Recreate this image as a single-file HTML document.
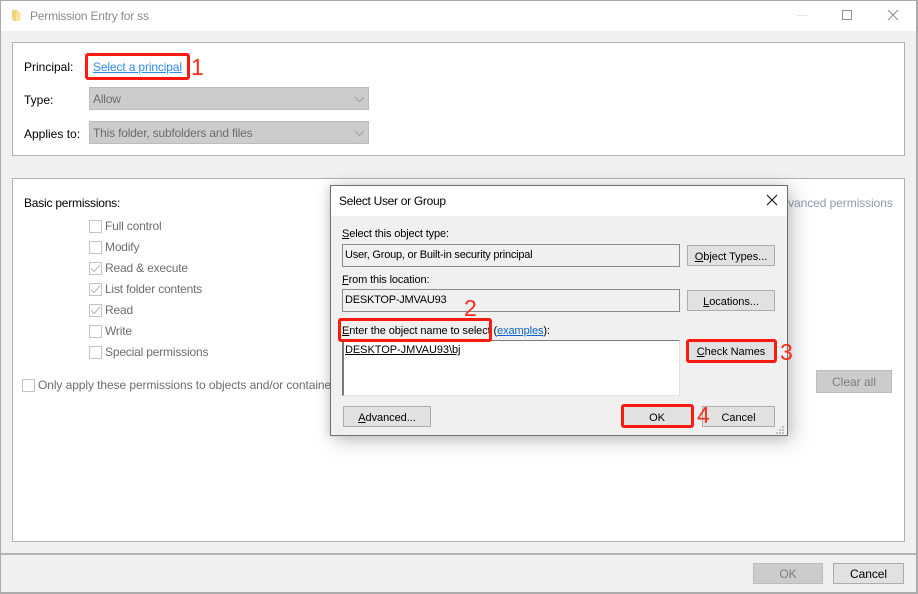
<!DOCTYPE html>
<html>
<head>
<meta charset="utf-8">
<style>
html,body{margin:0;padding:0;background:#fff;}
#p{position:relative;width:918px;height:594px;overflow:hidden;background:#f0f0f0;font-family:"Liberation Sans",sans-serif;font-size:12px;color:#000;}
#p div{position:absolute;box-sizing:border-box;}
.t{white-space:nowrap;line-height:16px;height:16px;letter-spacing:-.18px;}
.g{color:#6d6d6d;}
.cb{width:13px;height:13px;border:1px solid #c4c4c4;background:#fff;}
.cb svg{position:absolute;left:0;top:0;}
.btn{background:#e1e1e1;border:1px solid #adadad;text-align:center;line-height:22px;font-size:11px;white-space:nowrap;letter-spacing:-.05px;}
.f{background:#f0f0f0;border:1px solid #8a8a8a;font-size:11px;line-height:20px;padding-left:2px;white-space:nowrap;letter-spacing:-.22px;}
.r{border:3px solid #fb1a10;border-radius:3px;}
.n{color:#fb2a1c;font-size:23px;line-height:24px;height:24px;white-space:nowrap;font-weight:normal;}
u{text-underline-offset:1px;}
</style>
</head>
<body>
<div id="p">
  <!-- outer window -->
  <div style="left:0;top:0;width:918px;height:594px;border:1px solid #ababab;border-width:1px 2px 2px 1px;"></div>
  <div style="left:1px;top:1px;width:915px;height:30px;background:#fff;"></div>
  <svg style="position:absolute;left:12px;top:9px;" width="10" height="14" viewBox="0 0 10 14"><path d="M0 1h5v1l3 1v9H2l-2-2z" fill="#f3d27a"/><path d="M4 3h4.500v9H4z" fill="#fbe39c"/></svg>
  <div class="t" style="left:30px;top:8px;color:#8a8a8a;letter-spacing:-.2px;">Permission Entry for ss</div>
  <div style="left:797px;top:15px;width:10px;height:1px;background:#e4e4e4;"></div>
  <div style="left:842px;top:10px;width:10px;height:10px;border:1px solid #8f8f8f;"></div>
  <svg style="position:absolute;left:887px;top:9px;" width="12" height="12" viewBox="0 0 12 12"><path d="M1 1l10 10M11 1L1 11" stroke="#8f8f8f" stroke-width="1" fill="none"/></svg>

  <!-- panel 1 -->
  <div style="left:12px;top:42px;width:893px;height:114px;background:#fff;border:1px solid #b0b0b0;"></div>
  <div class="t" style="left:24px;top:59px;letter-spacing:0;">Principal:</div>
  <div class="t" style="left:93px;top:59px;color:#2f8cf0;text-decoration:underline;letter-spacing:-.14px;">Select a principal</div>
  <div class="r" style="left:85px;top:53px;width:105px;height:27px;"></div>
  <div class="n" style="left:191px;top:55px;">1</div>
  <div class="t" style="left:24px;top:92px;letter-spacing:0;">Type:</div>
  <div style="left:89px;top:87px;width:280px;height:23px;background:#cccccc;border:1px solid #bcbcbc;"></div>
  <div class="t g" style="left:93px;top:91px;">Allow</div>
  <svg style="position:absolute;left:354px;top:96px;" width="11" height="7" viewBox="0 0 11 7"><path d="M1 1l4.500 4.500L10 1" stroke="#a0a0a0" fill="none"/></svg>
  <div class="t" style="left:24px;top:126px;letter-spacing:0;">Applies to:</div>
  <div style="left:89px;top:121px;width:280px;height:23px;background:#cccccc;border:1px solid #bcbcbc;"></div>
  <div class="t g" style="left:93px;top:125px;">This folder, subfolders and files</div>
  <svg style="position:absolute;left:354px;top:130px;" width="11" height="7" viewBox="0 0 11 7"><path d="M1 1l4.500 4.500L10 1" stroke="#a0a0a0" fill="none"/></svg>

  <!-- panel 2 -->
  <div style="left:12px;top:178px;width:893px;height:364px;background:#fff;border:1px solid #b0b0b0;"></div>
  <div class="t" style="left:24px;top:195px;letter-spacing:-.22px;">Basic permissions:</div>

  <div class="cb" style="left:89px;top:220px;"></div><div class="t g" style="left:105px;top:218px;">Full control</div>
  <div class="cb" style="left:89px;top:241px;"></div><div class="t g" style="left:105px;top:239px;">Modify</div>
  <div class="cb" style="left:89px;top:262px;"><svg width="11" height="11" viewBox="0 0 11 11"><path d="M1 5.500l3 3 6-6.500" stroke="#b5b5b5" fill="none"/></svg></div><div class="t g" style="left:105px;top:260px;">Read &amp; execute</div>
  <div class="cb" style="left:89px;top:283px;"><svg width="11" height="11" viewBox="0 0 11 11"><path d="M1 5.500l3 3 6-6.500" stroke="#b5b5b5" fill="none"/></svg></div><div class="t g" style="left:105px;top:281px;">List folder contents</div>
  <div class="cb" style="left:89px;top:304px;"><svg width="11" height="11" viewBox="0 0 11 11"><path d="M1 5.500l3 3 6-6.500" stroke="#b5b5b5" fill="none"/></svg></div><div class="t g" style="left:105px;top:302px;">Read</div>
  <div class="cb" style="left:89px;top:325px;"></div><div class="t g" style="left:105px;top:323px;">Write</div>
  <div class="cb" style="left:89px;top:346px;"></div><div class="t g" style="left:105px;top:344px;">Special permissions</div>

  <div class="cb" style="left:22px;top:379px;"></div>
  <div class="t g" style="left:38px;top:377px;letter-spacing:-.08px;">Only apply these permissions to objects and/or containers within this container</div>

  <div class="t" style="left:742px;top:195px;color:#8f9bb0;letter-spacing:-.08px;">Show advanced permissions</div>
  <div style="left:816px;top:370px;width:76px;height:23px;background:#cccccc;border:1px solid #bcbcbc;text-align:center;line-height:22px;color:#7d7d7d;">Clear all</div>

  <!-- footer -->
  <div style="left:1px;top:553px;width:915px;height:2px;background:#b4b4b4;"></div>
  <div style="left:753px;top:563px;width:70px;height:21px;background:#cccccc;border:1px solid #bcbcbc;text-align:center;line-height:20px;color:#7d7d7d;">OK</div>
  <div class="btn" style="left:833px;top:563px;width:71px;height:21px;font-size:12px;line-height:20px;">Cancel</div>

  <!-- dialog -->
  <div style="left:330px;top:185px;width:458px;height:251px;background:#f0f0f0;border:1px solid #6f6f6f;box-shadow:5px 5px 18px rgba(0,0,0,.22),-2px 0 10px rgba(0,0,0,.12);overflow:hidden;"></div>
  <div style="left:331px;top:186px;width:456px;height:30px;background:#fff;"></div>
  <div class="t" style="left:339px;top:193px;letter-spacing:-.3px;">Select User or Group</div>
  <svg style="position:absolute;left:766px;top:194px;" width="12" height="12" viewBox="0 0 12 12"><path d="M1 1l10 10M11 1L1 11" stroke="#111" stroke-width="1.100" fill="none"/></svg>

  <div class="t" style="left:342px;top:226px;font-size:11px;letter-spacing:-.13px;"><u>S</u>elect this object type:</div>
  <div class="f" style="left:342px;top:244px;width:338px;height:23px;">User, Group, or Built-in security principal</div>
  <div class="t" style="left:342px;top:272px;font-size:11px;letter-spacing:-.13px;"><u>F</u>rom this location:</div>
  <div class="f" style="left:342px;top:289px;width:338px;height:23px;">DESKTOP-JMVAU93</div>
  <div class="btn" style="left:687px;top:245px;width:88px;height:21px;"><u>O</u>bject Types...</div>
  <div class="btn" style="left:687px;top:290px;width:88px;height:21px;"><u>L</u>ocations...</div>

  <div class="t" style="left:342px;top:323px;font-size:11px;letter-spacing:-.1px;"><u>E</u>nter the object name to select (<span style="color:#0a66c8;text-decoration:underline;">examples</span>):</div>
  <div style="left:342px;top:340px;width:338px;height:56px;background:#fff;border:1px solid #e0e0e0;border-top-color:#7a7a7a;border-left-color:#7a7a7a;border-left-width:2px;"></div>
  <div class="t" style="left:345px;top:342px;font-size:11px;text-decoration:underline;letter-spacing:-.05px;">DESKTOP-JMVAU93\bj</div>
  <div class="btn" style="left:343px;top:406px;width:88px;height:21px;"><u>A</u>dvanced...</div>
  <div class="btn" style="left:687px;top:340px;width:88px;height:22px;line-height:23px;"><u>C</u>heck Names</div>
  <div class="btn" style="left:622px;top:406px;width:70px;height:21px;">OK</div>
  <div class="btn" style="left:702px;top:406px;width:73px;height:21px;">Cancel</div>
  <svg style="position:absolute;left:776px;top:426px;" width="10" height="9" viewBox="0 0 10 9"><path d="M6 0h2v2H6zM3 3h2v2H3zM6 3h2v2H6zM0 6h2v2H0zM3 6h2v2H3zM6 6h2v2H6z" fill="#bdbdbd"/></svg>

  <!-- annotations -->
  <div class="r" style="left:338px;top:318px;width:154px;height:24px;"></div>
  <div class="n" style="left:464px;top:296px;">2</div>
  <div class="r" style="left:686px;top:339px;width:91px;height:24px;"></div>
  <div class="n" style="left:780px;top:340px;">3</div>
  <div class="r" style="left:621px;top:404px;width:73px;height:24px;"></div>
  <div class="n" style="left:697px;top:403px;">4</div>
</div>
</body>
</html>
